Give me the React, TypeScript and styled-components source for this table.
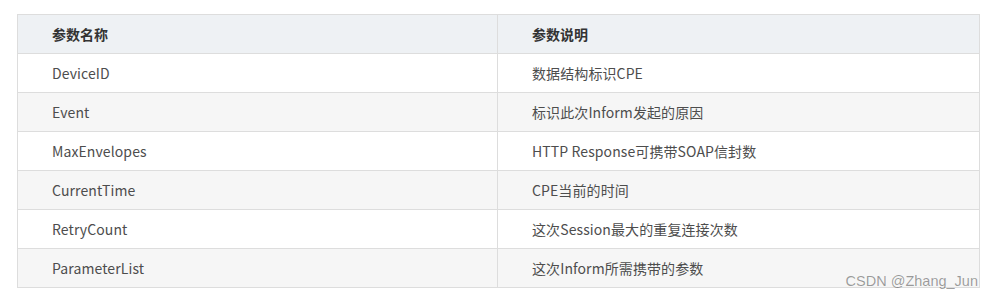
import React from "react"
import styled, { createGlobalStyle } from "styled-components"

const GlobalStyle = createGlobalStyle`
    body {
        margin: 0;
        background: #ffffff;
        font-family: "Noto Sans CJK SC", "Noto Sans", sans-serif;
    }
`

const Page = styled.div`
    position: relative;
    width: 995px;
    height: 302px;
    padding: 14px 16px 0 17px;
    box-sizing: border-box;
`

const Table = styled.table`
    width: 962px;
    border-collapse: collapse;
    table-layout: fixed;
    font-size: 14px;
    color: #4d4d4d;
`

const Col = styled.col<{ $width: number }>`
    width: ${(p) => p.$width}px;
`

const HeadRow = styled.tr`
    background: #eef1f4;
`

const Row = styled.tr<{ $striped: boolean }>`
    background: ${(p) => (p.$striped ? "#f6f6f6" : "#ffffff")};
`

const HeadCell = styled.th`
    height: 38px;
    padding: 0 0 0 34px;
    border: 1px solid #dddddd;
    text-align: left;
    font-weight: bold;
    color: #333333;
    vertical-align: middle;
`

const Cell = styled.td`
    height: 38px;
    padding: 0 0 0 34px;
    border: 1px solid #dddddd;
    vertical-align: middle;
    letter-spacing: 0.1px;
`

const Watermark = styled.div`
    position: absolute;
    right: 17px;
    top: 273px;
    font-family: "Liberation Sans", Arial, sans-serif;
    font-size: 14.5px;
    color: rgba(0, 0, 0, 0.38);
`

const rows: [string, string][] = [
    ["DeviceID", "数据结构标识CPE"],
    ["Event", "标识此次Inform发起的原因"],
    ["MaxEnvelopes", "HTTP Response可携带SOAP信封数"],
    ["CurrentTime", "CPE当前的时间"],
    ["RetryCount", "这次Session最大的重复连接次数"],
    ["ParameterList", "这次Inform所需携带的参数"],
]

export default function App() {
    return (
        <Page>
            <GlobalStyle />
            <Table>
                <colgroup>
                    <Col $width={480} />
                    <Col $width={482} />
                </colgroup>
                <thead>
                    <HeadRow>
                        <HeadCell>参数名称</HeadCell>
                        <HeadCell>参数说明</HeadCell>
                    </HeadRow>
                </thead>
                <tbody>
                    {rows.map(([name, desc], i) => (
                        <Row key={name} $striped={i % 2 === 1}>
                            <Cell>{name}</Cell>
                            <Cell>{desc}</Cell>
                        </Row>
                    ))}
                </tbody>
            </Table>
            <Watermark>CSDN @Zhang_Jun</Watermark>
        </Page>
    )
}
